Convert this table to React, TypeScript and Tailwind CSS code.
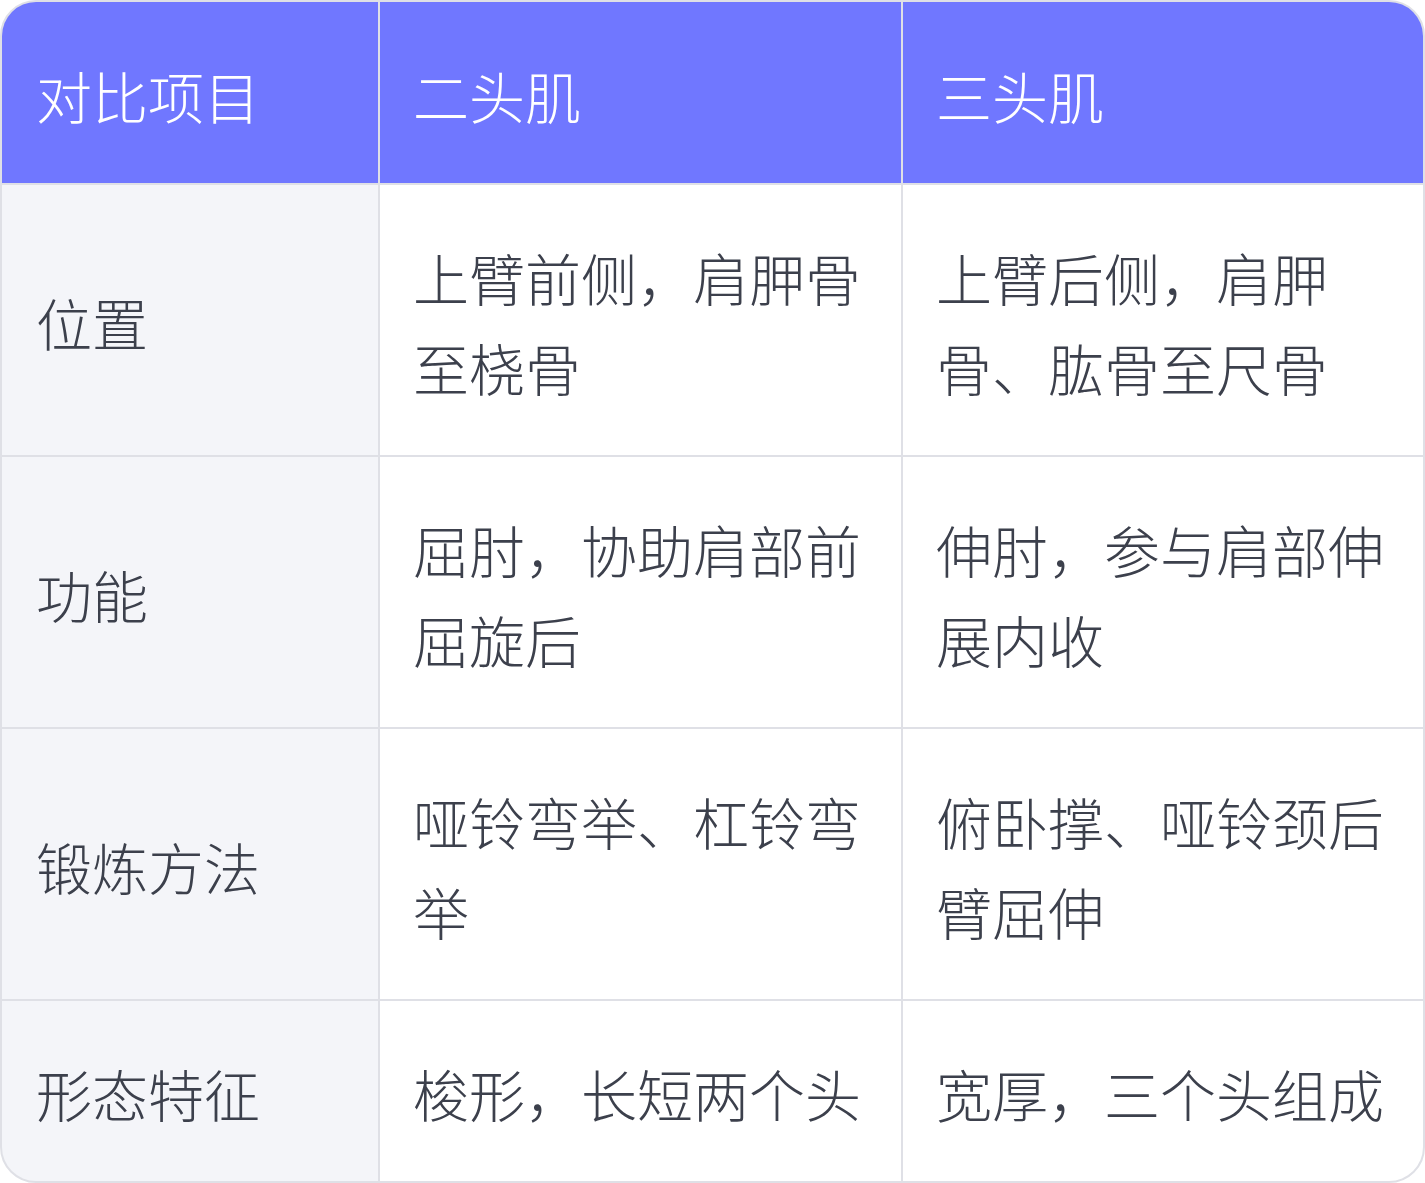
import React from "react";

const rows: [string, string, string][] = [
  ["位置", "上臂前侧，肩胛骨至桡骨", "上臂后侧，肩胛骨、肱骨至尺骨"],
  ["功能", "屈肘，协助肩部前屈旋后", "伸肘，参与肩部伸展内收"],
  ["锻炼方法", "哑铃弯举、杠铃弯举", "俯卧撑、哑铃颈后臂屈伸"],
  ["形态特征", "梭形，长短两个头", "宽厚，三个头组成"],
];

export default function App() {
  return (
    <div
      className="w-[1425px] h-[1183px] overflow-hidden rounded-[36px] border-2 border-[#dfe0e6] bg-[#dfe0e6]"
      style={{ fontFamily: '"Noto Sans CJK SC", "Noto Sans", sans-serif' }}
    >
      <div className="grid grid-cols-[376px_521px_520px] gap-[2px] text-[56px] leading-[90px] font-light">
        {["对比项目", "二头肌", "三头肌"].map((h, i) => (
          <div
            key={h}
            className={`bg-[#7077ff] text-white pt-[48px] pb-[43px] ${i === 0 ? "px-[34px]" : "px-[33px]"}`}
          >
            {h}
          </div>
        ))}
        {rows.map((r, i) => (
          <React.Fragment key={i}>
            <div className="bg-[#f4f5f9] text-[#3c404c] px-[34px] pt-[47px] pb-[43px] flex items-center">
              {r[0]}
            </div>
            <div className="bg-white text-[#3c404c] px-[33px] pt-[47px] pb-[43px] flex items-center">
              <span>{r[1]}</span>
            </div>
            <div className="bg-white text-[#3c404c] px-[33px] pt-[47px] pb-[43px] flex items-center">
              <span>{r[2]}</span>
            </div>
          </React.Fragment>
        ))}
      </div>
    </div>
  );
}
